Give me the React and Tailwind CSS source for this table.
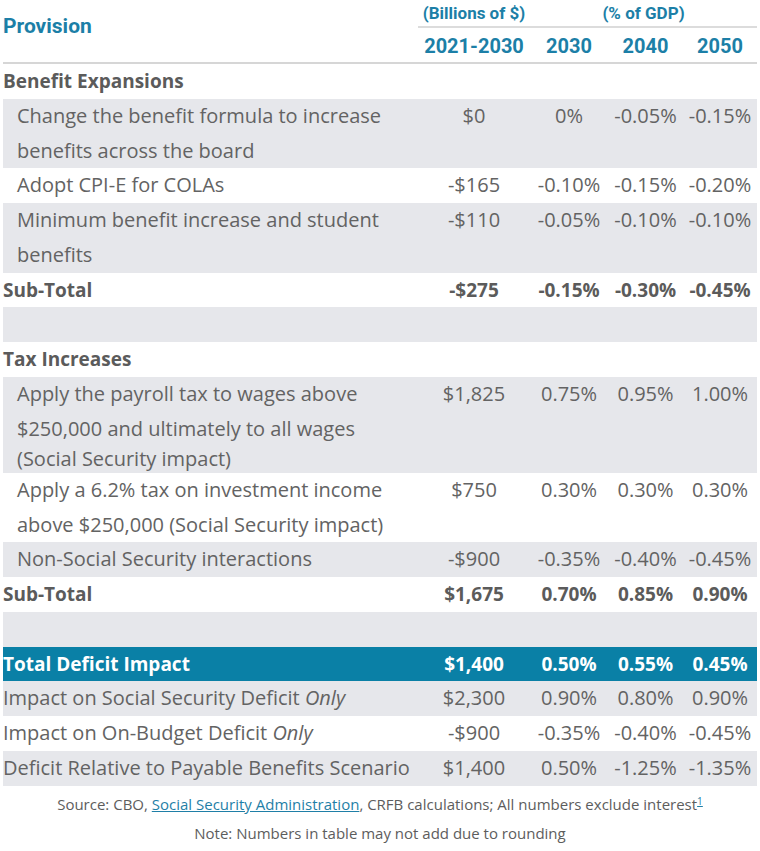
import React from "react";

const COLS = "grid grid-cols-[415px_112px_78px_75px_74px]";
const BODY = { fontFamily: "'Open Sans', 'Liberation Sans', sans-serif" };
const HEAD = { fontFamily: "Roboto, 'Liberation Sans', sans-serif" };

function Row({ bg = "", lines, vals, indent = true, bold = false, text = "text-[#636363]", lastLeading }) {
  return (
    <div className={`${COLS} ${bg} ${text} ${bold ? "font-bold text-[19px]" : "text-[20px]"} min-h-[34.75px]`}>
      <div className={`${indent ? "pl-[14px]" : ""}`}>
        {lines.map((l, i) => (
          <div
            key={i}
            className={`whitespace-nowrap ${lastLeading && i === lines.length - 1 ? "leading-[26.5px]" : "leading-[34.75px]"}`}
          >
            {l}
          </div>
        ))}
      </div>
      {(vals || ["", "", "", ""]).map((v, i) => (
        <div key={i} className="text-center leading-[34.75px] whitespace-nowrap">
          {v}
        </div>
      ))}
    </div>
  );
}

function Heading({ children }) {
  return (
    <div className="text-[19px] font-bold text-[#5b5b5b] leading-[34.75px] h-[34.75px]">{children}</div>
  );
}

export default function App() {
  const G = "bg-[#e6e7eb]";
  return (
    <div className="w-[760px] h-[851px] bg-white" style={BODY}>
      <div className="pl-[3px] w-[757px]">
        {/* header */}
        <div className="flex border-b-2 border-[#d6d6d6] h-[64px]" style={HEAD}>
          <div className="w-[415px] pt-[12px] text-[21px] font-bold text-[#1c7fa7] leading-[28px]">Provision</div>
          <div className="w-[339px] flex flex-col">
            <div className="flex border-b-2 border-[#dcdcdc] h-[28px] text-[17px] font-bold text-[#1c7fa7] leading-[26px]">
              <div className="w-[112px] text-center">(Billions of $)</div>
              <div className="w-[227px] text-center">(% of GDP)</div>
            </div>
            <div className="flex text-[20px] font-bold text-[#1c7fa7] leading-[34px] pt-[1px]">
              <div className="w-[112px] text-center">2021-2030</div>
              <div className="w-[78px] text-center">2030</div>
              <div className="w-[75px] text-center">2040</div>
              <div className="w-[74px] text-center">2050</div>
            </div>
          </div>
        </div>

        <Heading>Benefit Expansions</Heading>
        <Row bg={G} lines={["Change the benefit formula to increase", "benefits across the board"]} vals={["$0", "0%", "-0.05%", "-0.15%"]} />
        <Row lines={["Adopt CPI-E for COLAs"]} vals={["-$165", "-0.10%", "-0.15%", "-0.20%"]} />
        <Row bg={G} lines={["Minimum benefit increase and student", "benefits"]} vals={["-$110", "-0.05%", "-0.10%", "-0.10%"]} />
        <Row lines={["Sub-Total"]} indent={false} bold text="text-[#5b5b5b]" vals={["-$275", "-0.15%", "-0.30%", "-0.45%"]} />
        <Row bg={G} lines={[]} />
        <Heading>Tax Increases</Heading>
        <Row
          bg={G}
          lines={["Apply the payroll tax to wages above", "$250,000 and ultimately to all wages", "(Social Security impact)"]}
          lastLeading
          vals={["$1,825", "0.75%", "0.95%", "1.00%"]}
        />
        <Row lines={["Apply a 6.2% tax on investment income", "above $250,000 (Social Security impact)"]} vals={["$750", "0.30%", "0.30%", "0.30%"]} />
        <Row bg={G} lines={["Non-Social Security interactions"]} vals={["-$900", "-0.35%", "-0.40%", "-0.45%"]} />
        <Row lines={["Sub-Total"]} indent={false} bold text="text-[#5b5b5b]" vals={["$1,675", "0.70%", "0.85%", "0.90%"]} />
        <Row bg={G} lines={[]} />
        <Row bg="bg-[#0a80a6]" text="text-white" bold indent={false} lines={["Total Deficit Impact"]} vals={["$1,400", "0.50%", "0.55%", "0.45%"]} />
        <Row
          bg={G}
          indent={false}
          lines={[<span key="a">Impact on Social Security Deficit <i>Only</i></span>]}
          vals={["$2,300", "0.90%", "0.80%", "0.90%"]}
        />
        <Row
          indent={false}
          lines={[<span key="b">Impact on On-Budget Deficit <i>Only</i></span>]}
          vals={["-$900", "-0.35%", "-0.40%", "-0.45%"]}
        />
        <Row bg={G} indent={false} lines={["Deficit Relative to Payable Benefits Scenario"]} vals={["$1,400", "0.50%", "-1.25%", "-1.35%"]} />
      </div>

      <div className="mt-[4px] text-center text-[15px] text-[#5d5d5d] leading-[29px]">
        Source: CBO, <span className="text-[#1f7fa7] underline">Social Security Administration</span>, CRFB calculations; All numbers exclude interest
        <sup className="text-[#1f7fa7] underline text-[10px]">1</sup>
      </div>
      <div className="text-center text-[15px] text-[#5d5d5d] leading-[29px]">Note: Numbers in table may not add due to rounding</div>
    </div>
  );
}
